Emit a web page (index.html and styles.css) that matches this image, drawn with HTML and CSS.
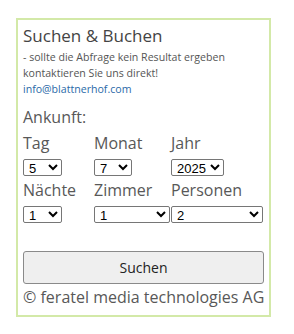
FILE: index.html
```html
<!DOCTYPE html>
<html lang="de">
<head>
<meta charset="utf-8">
<link rel="stylesheet" href="styles.css">
</head>
<body>
<div class="box">
  <h1 class="title">Suchen &amp; Buchen</h1>
  <p class="info">- sollte die Abfrage kein Resultat ergeben<br>kontaktieren Sie uns direkt!<br><a class="mail" href="#">info@blattnerhof.com</a></p>
  <div class="arrival">Ankunft:</div>
  <div class="grid">
    <div class="lbl">Tag</div>
    <div class="lbl">Monat</div>
    <div class="lbl">Jahr</div>
    <div class="cell"><select class="sel w39"><option>5</option></select></div>
    <div class="cell"><select class="sel w38"><option>7</option></select></div>
    <div class="cell"><select class="sel w53"><option>2025</option></select></div>
    <div class="lbl">Nächte</div>
    <div class="lbl">Zimmer</div>
    <div class="lbl">Personen</div>
    <div class="cell"><select class="sel w39"><option>1</option></select></div>
    <div class="cell"><select class="sel w76"><option>1</option></select></div>
    <div class="cell"><select class="sel w92"><option>2</option></select></div>
  </div>
  <button class="btn" type="button">Suchen</button>
  <div class="copy">© feratel media technologies AG</div>
</div>
</body>
</html>
```

FILE: styles.css
```css
html, body {
  margin: 0;
  padding: 0;
  background: #ffffff;
}

.box {
  margin: 18px 0 0 16px;
  width: 255px;
  height: 299px;
  box-sizing: border-box;
  border: 2px solid #d3e9a8;
  padding: 0 5px;
  font-family: "Open Sans", sans-serif;
  color: #585858;
}

.title {
  margin: 4px 0 0;
  font-size: 17px;
  font-weight: 400;
  line-height: 24px;
  color: #444444;
}

.info {
  margin: 1px 0 0;
  font-size: 10.6px;
  line-height: 16px;
  color: #555555;
}

.mail {
  color: #2a6aa8;
  text-decoration: none;
}

.arrival {
  margin-top: 10px;
  font-size: 16px;
  line-height: 20px;
}

.grid {
  margin-top: 4px;
  display: grid;
  grid-template-columns: 71px 77px 93px;
}

.lbl {
  font-size: 16px;
  line-height: 24px;
  margin-bottom: 4px;
}

.cell {
  height: 17px;
  margin-bottom: 2px;
}

.sel {
  display: block;
  height: 17px;
  box-sizing: border-box;
  padding: 0 0 0 1px;
  margin: 0;
  font-family: "Liberation Sans", Arial, sans-serif;
  font-size: 13px;
  color: #000000;
  border: 1px solid #767676;
  border-radius: 2px;
  background: #ffffff;
}

.w39 { width: 39px; }
.w38 { width: 38px; }
.w53 { width: 53px; }
.w76 { width: 76px; }
.w92 { width: 92px; }

.btn {
  display: block;
  margin-top: 26px;
  width: 241px;
  height: 33px;
  box-sizing: border-box;
  background: #efefef;
  border: 1px solid #8a8a8a;
  border-radius: 3px;
  font-family: "Open Sans", sans-serif;
  font-size: 14px;
  color: #222222;
  padding: 0;
}

.copy {
  margin-top: 3px;
  font-size: 16px;
  line-height: 20px;
  white-space: nowrap;
}
```
